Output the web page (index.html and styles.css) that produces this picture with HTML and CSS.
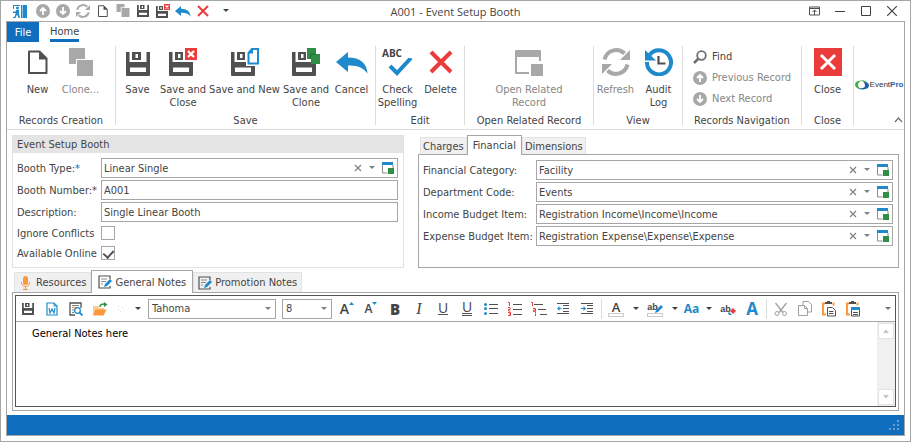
FILE: index.html
```html
<!DOCTYPE html>
<html lang="en">
<head>
    <meta charset="utf-8">
    <title>A001 - Event Setup Booth</title>
    <link rel="stylesheet" href="styles.css">
</head>
<body>
    <!-- shared icons -->
    <svg class="sprite" width="0" height="0">
        <symbol id="page" viewBox="0 0 28 28"><path d="M5 3.500h10.500l7 7v14.500h-17.500z" fill="none" stroke="#505050" stroke-width="2" stroke-linejoin="round"/><path d="M15 3v8.500h8.500z" fill="#505050"/></symbol>
        <symbol id="floppy" viewBox="0 0 28 28"><path fill-rule="evenodd" fill="#505050" d="M2 4h3.500v10h17v-10h3.500v23q0 1-1 1h-22q-1 0-1-1zM6 19.500v4.500h16v-4.500zM8 4h9v8h-9zM11.500 6v4h2.500v-4z"/></symbol>
        <symbol id="floppyx" viewBox="0 0 28 28"><path fill-rule="evenodd" fill="#505050" d="M0 4h3.500v10h20.500v13q0 1-1 1h-22q-1 0-1-1zM4 19.500v4.500h16v-4.500zM6 4h8v8h-8zM9 6v4h2.500v-4z"/><path d="M16 0h12v12h-12z" fill="#eb3c3c"/><path d="M19 3l6 6m0-6l-6 6" stroke="#fff" stroke-width="2.200"/></symbol>
        <symbol id="undo" viewBox="0 0 32 28"><path d="M0 14l12-10v5.500q18 0 19.500 16q-6-9-19.500-8v6.500z" fill="#1f8acb"/></symbol>
        <symbol id="cross" viewBox="0 0 28 28"><path d="M4 4l20 20m0-20l-20 20" stroke="#eb3c3c" stroke-width="4"/></symbol>
        <symbol id="up" viewBox="0 0 14 14"><circle cx="7" cy="7" r="7" fill="#a8a8a8"/><path d="M7 11v-7m-3 3l3-3 3 3" fill="none" stroke="#fff" stroke-width="1.800"/></symbol>
        <symbol id="down" viewBox="0 0 14 14"><circle cx="7" cy="7" r="7" fill="#a8a8a8"/><path d="M7 3v7m-3-3l3 3 3-3" fill="none" stroke="#fff" stroke-width="1.800"/></symbol>
        <symbol id="refresh" viewBox="0 0 28 28"><path d="M2.500 11.500a12 12 0 0 1 20-6M25.500 16.500a12 12 0 0 1-20 6" fill="none" stroke="#a8a8a8" stroke-width="4"/><path d="M28 2v10h-10zM0 26v-10h10z" fill="#a8a8a8"/></symbol>
        <symbol id="open" viewBox="0 0 14 14"><path d="M1.500 4v8h5m5.500-5v-3" fill="none" stroke="#8c8c8c"/><path d="M1 1h11v3h-11z" fill="#1f8acb"/><path d="M7 7h6v6h-6z" fill="#2f8f46"/></symbol>
        <symbol id="clear" viewBox="0 0 8 8"><path d="M1 1l6 6m0-6l-6 6" stroke="#808080" stroke-width="1.200"/></symbol>
        <symbol id="caret" viewBox="0 0 6 4"><path d="M0 0h6l-3 3z" fill="currentColor"/></symbol>
        <symbol id="note" viewBox="0 0 14 14"><path d="M12 4v-3h-11v12h11v-2" fill="none" stroke="#505050" stroke-width="1.200"/><path d="M3 4h6M3 6.500h5M3 9h2" stroke="#8c8c8c"/><path d="M6 12l1-3 5-5 2 2-5 5z" fill="#1f8acb"/></symbol>
    </svg>

    <div class="window">
        <header class="titlebar">
            <div class="quick">
                <svg class="app" width="14" height="13" viewBox="0 0 14 13"><path d="M8 0h6v13h-6z" fill="#1f8acb"/><path d="M9.500 0v13" stroke="#8cc4e8"/><path d="M0 .5h7M.5 0v4M0 12.500h2" stroke="#1f8acb"/><circle cx="4.500" cy="3" r="1.500" fill="#1f8acb"/><path d="M3 5h3v4l1 4h-1.500l-1.500-3.500-1.500 3.500h-1.500l1.500-4zM0 6.500h3v1.500h-3z" fill="#1f8acb"/></svg>
                <button aria-label="Previous"><svg width="14" height="14"><use href="#up"/></svg></button>
                <button aria-label="Next"><svg width="14" height="14"><use href="#down"/></svg></button>
                <button aria-label="Refresh"><svg width="14" height="14"><use href="#refresh"/></svg></button>
                <button aria-label="New"><svg width="14" height="14"><use href="#page"/></svg></button>
                <button aria-label="Clone"><svg width="14" height="14" viewBox="1 2 28 28"><path d="M2 2h16v6.500h-7.500v9.500h-8.500zM12 10h16v18h-16z" fill="#a8a8a8"/></svg></button>
                <button aria-label="Save"><svg width="14" height="14" viewBox="0 2 28 28"><use href="#floppy" width="28" height="28"/></svg></button>
                <button aria-label="Save and Close"><svg width="14" height="14"><use href="#floppyx"/></svg></button>
                <button aria-label="Cancel"><svg width="16" height="14"><use href="#undo"/></svg></button>
                <button aria-label="Delete"><svg width="14" height="14"><use href="#cross"/></svg></button>
                <button class="more" aria-label="Customize"><svg width="6" height="4"><use href="#caret"/></svg></button>
            </div>
            <div class="title">A001 - Event Setup Booth</div>
            <div class="controls">
                <button aria-label="Ribbon display"><svg width="11" height="10" viewBox="0 0 11 10"><path d="M.5 1h10v8h-10zM1 2.500h9M5.500 9v-5M3.500 6l2-2 2 2" fill="none" stroke="#505050"/></svg></button>
                <button aria-label="Minimize"><svg width="10" height="10"><path d="M0 5.500h10" stroke="#404040"/></svg></button>
                <button aria-label="Maximize"><svg width="10" height="10"><path d="M.5.5h9v9h-9z" fill="none" stroke="#404040"/></svg></button>
                <button aria-label="Close window"><svg width="10" height="10"><path d="M0 0l10 10m0-10l-10 10" stroke="#404040" stroke-width="1.200"/></svg></button>
            </div>
        </header>

        <main class="frame">
            <nav class="menu">
                <a class="file" href="#">File</a>
                <a class="home" href="#">Home</a>
            </nav>

            <div class="ribbon">
                <section class="group records">
                    <div class="tools">
                        <button class="big"><svg width="28" height="28"><use href="#page"/></svg>New</button>
                        <button class="big off"><svg width="28" height="28" viewBox="0 0 28 28"><path d="M2 0h16v11h-8v5h-8zM11 12h15v16h-16v-16z" fill="#a8a8a8"/><path d="M9.500 28v-16.500h9" fill="none" stroke="#fff"/></svg>Clone...</button>
                    </div>
                    <h2>Records Creation</h2>
                </section>
                <section class="group save">
                    <div class="tools">
                        <button class="big"><svg width="28" height="28"><use href="#floppy"/></svg>Save</button>
                        <button class="big mid"><svg width="28" height="28"><use href="#floppyx"/></svg>Save and<br>Close</button>
                        <button class="big wide"><svg width="28" height="28" viewBox="0 0 28 28"><path fill-rule="evenodd" fill="#505050" d="M0 4h3.500v10h20.500v13q0 1-1 1h-22q-1 0-1-1zM4 19.500v4.500h16v-4.500zM6 4h8v8h-8zM9 6v4h2.500v-4z"/><path d="M15 0h13v18h-13z" fill="#fff"/><path d="M21 1h6v14.500h-9.500v-10.500z" fill="#fff" stroke="#1f8acb" stroke-width="2"/><path d="M17 5.500h5v-5z" fill="#1f8acb"/></svg>Save and New</button>
                        <button class="big mid"><svg width="28" height="28" viewBox="0 0 28 28"><path fill-rule="evenodd" fill="#505050" d="M0 4h3.500v10h20.500v13q0 1-1 1h-22q-1 0-1-1zM4 19.500v4.500h16v-4.500zM6 4h8v8h-8zM9 6v4h2.500v-4z"/><path d="M15 0h9v6h4v10h-9v-5h-4z" fill="#2f8f46"/><path d="M18.500 11v-5h5.500" fill="none" stroke="#1f6e34"/></svg>Save and<br>Clone</button>
                        <button class="big"><svg width="32" height="28"><use href="#undo"/></svg>Cancel</button>
                    </div>
                    <h2>Save</h2>
                </section>
                <section class="group edit">
                    <div class="tools">
                        <button class="big check"><span class="abc">ABC</span><svg width="30" height="18" viewBox="0 0 30 18"><path d="M7 8l7 7 14-15" fill="none" stroke="#1f8acb" stroke-width="4"/></svg>Check<br>Spelling</button>
                        <button class="big"><svg width="28" height="28"><use href="#cross"/></svg>Delete</button>
                    </div>
                    <h2>Edit</h2>
                </section>
                <section class="group related">
                    <div class="tools">
                        <button class="big off"><svg width="28" height="28" viewBox="0 0 28 28"><path d="M0 3q0-1 1-1h24q1 0 1 1v10h-2v-4h-22v15h12v2h-14z" fill="#a8a8a8"/><path d="M16 16h12v12h-12z" fill="#a8a8a8"/></svg>Open Related<br>Record</button>
                    </div>
                    <h2>Open Related Record</h2>
                </section>
                <section class="group view">
                    <div class="tools">
                        <button class="big off"><svg width="28" height="28"><use href="#refresh"/></svg>Refresh</button>
                        <button class="big"><svg width="28" height="28" viewBox="0 0 28 28"><path d="M4.500 7a12 12 0 1 1-2.500 7" fill="none" stroke="#1f8acb" stroke-width="4"/><path d="M0 2v10.500h11z" fill="#1f8acb"/><path d="M13.500 8v7.500h7" fill="none" stroke="#505050" stroke-width="2.200"/></svg>Audit<br>Log</button>
                    </div>
                    <h2>View</h2>
                </section>
                <section class="group nav">
                    <div class="list">
                        <button><svg width="14" height="14" viewBox="0 0 14 14"><circle cx="8.500" cy="5.500" r="4.300" fill="none" stroke="#707070" stroke-width="1.800"/><path d="M5.500 8.500l-4.500 4.500" stroke="#707070" stroke-width="2.500"/></svg>Find</button>
                        <button class="off"><svg width="14" height="14"><use href="#up"/></svg>Previous Record</button>
                        <button class="off"><svg width="14" height="14"><use href="#down"/></svg>Next Record</button>
                    </div>
                    <h2>Records Navigation</h2>
                </section>
                <section class="group close">
                    <div class="tools">
                        <button class="big"><svg width="28" height="28" viewBox="0 0 28 28"><path d="M0 0h28v28h-28z" fill="#eb3c3c"/><path d="M7 7l14 14m0-14l-14 14" stroke="#fff" stroke-width="3"/></svg>Close</button>
                    </div>
                    <h2>Close</h2>
                </section>
                <div class="brand">
                    <div class="logo">
                        <svg width="14" height="10" viewBox="0 0 14 10"><path d="M6 .5q-6 .5-6 4t6 5q-3-2-3-4.500t3-4.500z" fill="#3fae49"/><path d="M5 1q5-2 7 2-3-2-7-2z" fill="#3fae49"/><path d="M8 1.500q6 .5 6 4t-6 4q-3 0-4-1.500 6 1 6-2.500 0-2.500-2-4z" fill="#1b5fa8"/></svg>
                        <span>Event<b>Pro</b></span>
                    </div>
                    <button class="fold" aria-label="Collapse the ribbon"><svg width="9" height="6"><path d="M1 5l3.500-4 3.500 4" fill="none" stroke="#707070" stroke-width="1.300"/></svg></button>
                </div>
            </div>

            <div class="panels">
                <section class="booth">
                    <h3>Event Setup Booth</h3>
                    <div class="fields">
                        <label for="type">Booth Type:<span class="req">*</span></label>
                        <div class="box">
                            <select id="type"><option>Linear Single</option></select>
                            <button aria-label="Clear"><svg width="8" height="8"><use href="#clear"/></svg></button>
                            <button aria-label="Show list"><svg width="6" height="4"><use href="#caret"/></svg></button>
                            <button aria-label="Open record"><svg width="14" height="14"><use href="#open"/></svg></button>
                        </div>
                        <label for="number">Booth Number:<span class="req dark">*</span></label>
                        <input class="box" id="number" type="text" value="A001">
                        <label for="description">Description:</label>
                        <input class="box" id="description" type="text" value="Single Linear Booth">
                        <label for="ignore">Ignore Conflicts</label>
                        <input id="ignore" type="checkbox">
                        <label for="online">Available Online</label>
                        <input id="online" type="checkbox" checked>
                    </div>
                </section>

                <section class="money">
                    <div class="tabs">
                        <button>Charges</button>
                        <button class="active">Financial</button>
                        <button>Dimensions</button>
                    </div>
                    <div class="page fields">
                        <label for="category">Financial Category:</label>
                        <div class="box">
                            <select id="category"><option>Facility</option></select>
                            <button aria-label="Clear"><svg width="8" height="8"><use href="#clear"/></svg></button>
                            <button aria-label="Show list"><svg width="6" height="4"><use href="#caret"/></svg></button>
                            <button aria-label="Open record"><svg width="14" height="14"><use href="#open"/></svg></button>
                        </div>
                        <label for="department">Department Code:</label>
                        <div class="box">
                            <select id="department"><option>Events</option></select>
                            <button aria-label="Clear"><svg width="8" height="8"><use href="#clear"/></svg></button>
                            <button aria-label="Show list"><svg width="6" height="4"><use href="#caret"/></svg></button>
                            <button aria-label="Open record"><svg width="14" height="14"><use href="#open"/></svg></button>
                        </div>
                        <label for="income">Income Budget Item:</label>
                        <div class="box">
                            <select id="income"><option>Registration Income\Income\Income</option></select>
                            <button aria-label="Clear"><svg width="8" height="8"><use href="#clear"/></svg></button>
                            <button aria-label="Show list"><svg width="6" height="4"><use href="#caret"/></svg></button>
                            <button aria-label="Open record"><svg width="14" height="14"><use href="#open"/></svg></button>
                        </div>
                        <label for="expense">Expense Budget Item:</label>
                        <div class="box">
                            <select id="expense"><option>Registration Expense\Expense\Expense</option></select>
                            <button aria-label="Clear"><svg width="8" height="8"><use href="#clear"/></svg></button>
                            <button aria-label="Show list"><svg width="6" height="4"><use href="#caret"/></svg></button>
                            <button aria-label="Open record"><svg width="14" height="14"><use href="#open"/></svg></button>
                        </div>
                    </div>
                </section>
            </div>

            <section class="notes">
                <div class="tabs tall">
                    <button><svg width="14" height="14" viewBox="0 0 14 14"><rect x="4" y="0" width="5" height="9" rx="2.500" fill="#fb983b"/><path d="M2.500 6q0 4.500 4 4.500t4-4.500M6.500 10.500v3M4 13.500h5" fill="none" stroke="#fb983b"/></svg>Resources</button>
                    <button class="active"><svg width="14" height="14"><use href="#note"/></svg>General Notes</button>
                    <button><svg width="14" height="14"><use href="#note"/></svg>Promotion Notes</button>
                </div>
                <div class="page">
                    <div class="editor">
                        <div class="bar">
                            <button aria-label="Save"><svg width="14" height="14" viewBox="0 2 28 28"><use href="#floppy" width="28" height="28"/></svg></button>
                            <button aria-label="Word"><svg width="14" height="14" viewBox="0 0 14 14"><path d="M2 1h7l3 3v9h-10z" fill="#fff" stroke="#1f8acb" stroke-width="1.200"/><path d="M9 1v3h3" fill="none" stroke="#1f8acb"/><path d="M4 6l1 5 2-4 2 4 1-5" fill="none" stroke="#1f8acb" stroke-width="1.200"/></svg></button>
                            <button aria-label="Preview"><svg width="14" height="14" viewBox="0 0 14 14"><path d="M6 13h-5v-12h11v5" fill="none" stroke="#505050" stroke-width="1.300"/><path d="M3 3.500h7M3 8h2M3 10.500h2" stroke="#808080"/><path d="M3 5.500h5" stroke="#fb983b"/><circle cx="8.500" cy="8.500" r="2.800" fill="#fff" stroke="#1f8acb" stroke-width="1.300"/><path d="M10.500 10.500l3 3" stroke="#1f8acb" stroke-width="1.800"/></svg></button>
                            <button aria-label="Open"><svg width="16" height="14" viewBox="0 0 16 14"><path d="M1 12v-8h5l1 2h5v6z" fill="#ffc98f"/><path d="M3.500 7.500h11l-3 6h-10.500z" fill="#fb983b"/><path d="M8 5q0-3 4-3" fill="none" stroke="#2f8f46" stroke-width="1.500"/><path d="M12 0l3.500 2.500-3.500 2.500z" fill="#2f8f46"/></svg></button>
                            <button class="recent" aria-label="Recent"><svg width="6" height="8"><path d="M0 1.500h1m-1 3h1m3-2h1m-3 4h1m2-1h1" stroke="#ddd"/></svg></button>
                            <button class="drop" aria-label="Recent list"><svg width="6" height="4"><use href="#caret"/></svg></button>
                            <div class="pick font"><select aria-label="Font"><option>Tahoma</option></select><svg width="6" height="4"><use href="#caret"/></svg></div>
                            <div class="pick"><select aria-label="Size"><option>8</option></select><svg width="6" height="4"><use href="#caret"/></svg></div>
                            <button class="grow">A<svg width="5" height="10"><path d="M0 4l2.500-3 2.500 3z" fill="#1f8acb"/></svg></button>
                            <button class="grow less">A<svg width="5" height="10"><path d="M0 1l2.500 3 2.500-3z" fill="#1f8acb"/></svg></button>
                            <button class="letter"><b>B</b></button>
                            <button class="letter"><i>I</i></button>
                            <button class="letter"><span class="under">U</span></button>
                            <button class="letter"><span class="under twice">U</span></button>
                            <button aria-label="Bullets"><svg width="14" height="12"><path d="M5 1.500h9m-9 4h9m-9 5h9" stroke="#505050"/><g fill="#1f8acb"><circle cx="1.500" cy="1.500" r="1.500"/><circle cx="1.500" cy="5.500" r="1.500"/><circle cx="1.500" cy="10.500" r="1.500"/></g></svg></button>
                            <button aria-label="Numbering"><svg width="14" height="14"><path d="M5 2.500h9m-9 5h9m-9 5h9" stroke="#505050"/><path d="M0 .5h1.500v3.500M0 5.500h2v2h-1.500v1.500h2M0 10.500h2.500v3h-2.500M1 12h1.500" fill="none" stroke="#eb3c3c"/></svg></button>
                            <button aria-label="Outline"><svg width="16" height="14"><path d="M3 2.500h9m-5 5h8m-6 5h7" stroke="#505050"/><path d="M0 .5h1.500v3.500M2 6.500h2.500v3h-2v-1.500h2M4.500 10v1m0 .5v2.500" fill="none" stroke="#eb3c3c"/></svg></button>
                            <button aria-label="Decrease indent"><svg width="12" height="12"><path d="M0 .5h12m-6 2h6m-6 3h6m-6 3h6m-12 2h12" stroke="#505050"/><path d="M0 5.500l2.500-2.500v2h2v1h-2v2z" fill="#1f8acb"/></svg></button>
                            <button aria-label="Increase indent"><svg width="12" height="12"><path d="M0 .5h12m-6 2h6m-6 3h6m-6 3h6m-12 2h12" stroke="#505050"/><path d="M5 5.500l-2.500-2.500v2h-2.500v1h2.500v2z" fill="#1f8acb"/></svg></button>
                            <span class="split"></span>
                            <button class="mark">A<span></span></button>
                            <button class="drop" aria-label="Font color"><svg width="6" height="4"><use href="#caret"/></svg></button>
                            <button class="marker"><span class="ab">ab</span><svg width="8" height="8"><path d="M0 8l1-3 5-5 2 2-5 5z" fill="#1f8acb"/></svg><span class="swatch"></span></button>
                            <button class="drop" aria-label="Highlight color"><svg width="6" height="4"><use href="#caret"/></svg></button>
                            <button class="case">Aa</button>
                            <button class="drop" aria-label="Change case"><svg width="6" height="4"><use href="#caret"/></svg></button>
                            <button class="marker"><span class="ab">ab</span><svg width="8" height="8"><path d="M2 4l3-3 3 3-3 3z" fill="#eb3c3c"/><path d="M0 6l1-1 3 3h-3z" fill="#1f8acb"/></svg></button>
                            <button class="fontbox">A</button>
                            <span class="split"></span>
                            <button aria-label="Cut"><svg width="14" height="14"><path d="M1.500 1l7.500 9.500M12.500 1l-7.500 9.500" stroke="#a0a0a0" stroke-width="1.300"/><g fill="none" stroke="#a0a0a0"><circle cx="3" cy="11.500" r="2"/><circle cx="10.500" cy="11.500" r="2"/></g></svg></button>
                            <button aria-label="Copy"><svg width="14" height="15"><path d="M5 4.500v-4h5.500l3 3v7.500h-4M.5 4.500h6l3 3v7h-9zM6.500 4.500v3h3" fill="none" stroke="#a0a0a0"/></svg></button>
                            <button aria-label="Paste"><svg width="14" height="16"><path d="M3 2.500h-2v11h3M10.500 2.500h1v2" fill="none" stroke="#fb983b" stroke-width="2"/><path d="M3 1h2v-1h3v1h2v2h-7z" fill="#505050"/><path d="M5.500 6.500h5l3 3v5.500h-8zM7 10.500h4.500m-4.500 2h4.500" fill="#fff" stroke="#505050"/></svg></button>
                            <button aria-label="Paste special"><svg width="14" height="16"><path d="M3 2.500h-2v11h3M10.500 2.500h1v2" fill="none" stroke="#fb983b" stroke-width="2"/><path d="M3 1h2v-1h3v1h2v2h-7z" fill="#505050"/><path d="M5.500 8.500h8v6.500h-8zM7 11.500h5m-5 2h5" fill="#fff" stroke="#505050"/><path d="M5 6h9v3h-9z" fill="#1f8acb"/></svg></button>
                            <button class="drop last" aria-label="More"><svg width="6" height="4"><use href="#caret"/></svg></button>
                        </div>
                        <div class="sheet">
                            <textarea aria-label="General Notes">General Notes here</textarea>
                            <div class="scroll">
                                <button aria-label="Scroll up"><svg width="6" height="4"><path d="M0 4h6l-3-3.500z" fill="#c4c4c4"/></svg></button>
                                <button aria-label="Scroll down"><svg width="6" height="4"><path d="M0 0h6l-3 3.500z" fill="#c4c4c4"/></svg></button>
                            </div>
                        </div>
                    </div>
                </div>
            </section>

            <footer class="status">
                <svg width="11" height="11"><path d="M8 1h2m-6 4h2m2 0h2m-10 4h2m2 0h2m2 0h2" stroke="#6f9dc8" stroke-width="2"/></svg>
            </footer>
        </main>
    </div>
</body>
</html>
```
FILE: styles.css
```css
* {
    box-sizing: border-box;
}
body {
    margin: 0;
    font: 11px/13px "DejaVu Sans Condensed", "DejaVu Sans", sans-serif;
    color: #444;
    background: #fff;
}
button, input, select, textarea {
    margin: 0;
    padding: 0;
    border: none;
    background: none;
    font: inherit;
    color: inherit;
    outline: none;
}
button {
    display: flex;
    align-items: center;
    justify-content: center;
}
select {
    appearance: none;
}
svg {
    flex: none;
}
h2, h3 {
    margin: 0;
    font-size: inherit;
    font-weight: normal;
}
.sprite {
    position: absolute;
}
.window {
    display: flex;
    flex-direction: column;
    height: 100vh;
    min-height: 400px;
    padding: 0 5px 5px;
    border: 1px solid #a6a6a6;
}

/* title bar */
.titlebar {
    display: grid;
    grid-template-columns: 1fr auto 1fr;
    align-items: center;
    height: 20px;
}
.quick, .controls {
    display: flex;
    align-items: center;
}
.quick button {
    width: 20px;
    height: 20px;
}
.quick .app {
    margin: 0 6px 0 7px;
}
.quick .more {
    width: 26px;
}
.title {
    font-family: "Open Sans", sans-serif;
}
.controls {
    justify-content: flex-end;
}
.controls button {
    width: 26px;
    height: 20px;
}

/* ribbon */
.frame {
    flex: 1;
    display: flex;
    flex-direction: column;
    min-height: 0;
    border: 1px solid #a6a6a6;
}
.menu {
    display: flex;
    height: 20px;
}
.menu a {
    line-height: 21px;
    color: #444;
    text-decoration: none;
}
.menu .file {
    width: 32px;
    text-align: center;
    color: #fff;
    background: #106ebe;
}
.menu .home {
    margin-left: 11px;
    height: 20px;
    line-height: 20px;
    border-bottom: 3px solid #106ebe;
}
.ribbon {
    display: flex;
    height: 88px;
    border-bottom: 1px solid #dcdcdc;
}
.group {
    display: flex;
    flex-direction: column;
    justify-content: space-between;
    margin: 4px 0;
    border-right: 1px solid #dcdcdc;
    text-align: center;
    white-space: nowrap;
}
.group h2 {
    line-height: 8px;
}
.tools {
    display: flex;
    padding-top: 2px;
}
.big {
    flex-direction: column;
    justify-content: flex-start;
    width: 43px;
}
.big svg {
    margin-bottom: 7px;
}
.big.mid {
    width: 48px;
}
.big.wide {
    width: 75px;
}
.off {
    color: #868686;
}
.records {
    width: 109px;
}
.records .tools {
    padding-left: 9px;
}
.save {
    width: 260px;
}
.edit {
    width: 89px;
}
.related {
    width: 129px;
}
.related .tools, .close .tools {
    justify-content: center;
}
.related .big {
    width: 80px;
}
.view {
    width: 89px;
}
.nav {
    width: 119px;
}
.close {
    width: 52px;
}
.list button {
    gap: 5px;
    height: 21px;
    margin-left: 10px;
}
.abc {
    align-self: flex-start;
    padding-left: 6px;
    font: bold 10px/10px "Open Sans", sans-serif;
}
.brand {
    flex: 1;
    display: flex;
    flex-direction: column;
    align-items: center;
    justify-content: space-between;
    padding: 36px 0 6px;
}
.brand .fold {
    align-self: flex-end;
    padding-right: 1px;
}
.logo {
    display: flex;
    align-items: center;
    gap: 1px;
    font: 8px/14px "Liberation Sans", sans-serif;
    color: #333;
}
.logo b {
    color: #1b5fa8;
}

/* booth and financial panels */
.panels {
    display: grid;
    grid-template-columns: 392fr 481fr;
    gap: 14px;
    padding: 5px 5px 2px;
}
.booth {
    border: 1px solid #e2e2e2;
}
.booth h3 {
    padding: 0 4px;
    line-height: 17px;
    background: #e4e4e4;
}
.fields {
    display: grid;
    align-items: center;
    row-gap: 2px;
    padding: 5px 5px 5px 4px;
}
.booth .fields {
    grid-template-columns: 84px 1fr;
}
.req {
    color: #106ebe;
}
.req.dark {
    color: #444;
}
.box {
    display: flex;
    align-items: center;
    min-width: 0;
    height: 20px;
    padding: 0 0 0 2px;
    border: 1px solid #a6a6a6;
}
.box select {
    flex: 1;
    min-width: 0;
}
.box button {
    width: 14px;
    height: 18px;
    color: #808080;
}
.box button:last-child {
    width: 18px;
}
input[type="checkbox"] {
    appearance: none;
    display: flex;
    justify-content: center;
    width: 14px;
    height: 14px;
    margin: 2px 0;
    border: 1px solid #a6a6a6;
}
input[type="checkbox"]:checked::after {
    content: "";
    width: 5px;
    height: 8px;
    margin-top: 1px;
    border: solid #555;
    border-width: 0 2px 2px 0;
    transform: rotate(42deg);
}
.tabs {
    display: flex;
    align-items: flex-end;
    height: 19px;
    padding-left: 2px;
}
.tabs button {
    height: 17px;
    padding: 0 2px;
    border: 1px solid #e2e2e2;
    border-bottom: none;
    background: #f0f0f0;
}
.tabs .active {
    z-index: 1;
    height: 20px;
    margin-bottom: -1px;
    padding: 0 5px;
    border-color: #a6a6a6;
    background: #fff;
}
.money {
    display: flex;
    flex-direction: column;
}
.page {
    flex: 1;
    border: 1px solid #a6a6a6;
}
.money .fields {
    grid-template-columns: 113px 1fr;
    align-content: start;
}

/* notes */
.notes {
    flex: 1;
    display: flex;
    flex-direction: column;
    min-height: 0;
    padding: 0 5px 4px;
}
.tabs.tall {
    height: 22px;
}
.tall button {
    gap: 3px;
    height: 20px;
    padding: 0 4px;
}
.tall .active {
    height: 23px;
    padding: 0 6px;
}
.notes .page {
    display: flex;
    min-height: 0;
    padding: 2px 2px 3px;
}
.editor {
    flex: 1;
    display: flex;
    flex-direction: column;
    min-width: 0;
    border: 1px solid #555;
}
.bar {
    display: flex;
    align-items: center;
    height: 26px;
    border-bottom: 1px solid #a6a6a6;
}
.bar button {
    flex: none;
    width: 24px;
    height: 24px;
}
.bar .recent {
    width: 18px;
}
.bar .drop {
    width: 15px;
}
.bar .last {
    margin-left: auto;
    color: #777;
}
.pick {
    display: flex;
    align-items: center;
    width: 50px;
    height: 20px;
    margin-right: 3px;
    padding: 0 4px 0 3px;
    border: 1px solid #a6a6a6;
    color: #808080;
}
.pick.font {
    width: 128px;
    margin: 0 6px 0 3px;
}
.pick select {
    flex: 1;
    min-width: 0;
    color: #444;
}
.bar .grow {
    font: 600 14px "Open Sans", sans-serif;
}
.grow svg {
    align-self: flex-start;
    margin-top: 4px;
}
.bar .less {
    font-size: 12px;
}
.letter {
    font: 600 15px "Open Sans", sans-serif;
}
.letter i {
    font-family: "Liberation Serif", serif;
    font-weight: normal;
    font-size: 16px;
}
.under {
    height: 13px;
    line-height: 11px;
    font-size: 14px;
    font-weight: normal;
    border-bottom: 1px solid #505050;
}
.under.twice {
    height: 15px;
    border-bottom: 3px double #505050;
}
.split {
    width: 1px;
    height: 20px;
    margin: 0 2px;
    background: #dcdcdc;
}
.mark {
    flex-direction: column;
    font: 600 13px/12px "Open Sans", sans-serif;
}
.mark span, .swatch {
    width: 16px;
    height: 4px;
    border: 1px solid #ccc;
}
.marker {
    flex-wrap: wrap;
    align-content: center;
}
.marker svg {
    margin: 4px 0 0 -3px;
}
.ab {
    font: bold 9px/10px "Liberation Sans", sans-serif;
}
.bar .case {
    width: 19px;
    font: bold 12px "Open Sans", sans-serif;
    color: #1f8acb;
}
.fontbox {
    font: bold 17px "Open Sans", sans-serif;
    color: #1f8acb;
}
.sheet {
    flex: 1;
    display: flex;
    min-height: 0;
}
.sheet textarea {
    flex: 1;
    padding: 5px 16px;
    resize: none;
    color: #000;
}
.scroll {
    display: flex;
    flex-direction: column;
    justify-content: space-between;
    padding: 1px;
    background: #f0f0f0;
}
.scroll button {
    width: 16px;
    height: 16px;
    border: 1px solid #e2e2e2;
    background: #fff;
}
.status {
    display: flex;
    align-items: flex-end;
    justify-content: flex-end;
    height: 20px;
    padding: 4px;
    background: #106ebe;
}
```
